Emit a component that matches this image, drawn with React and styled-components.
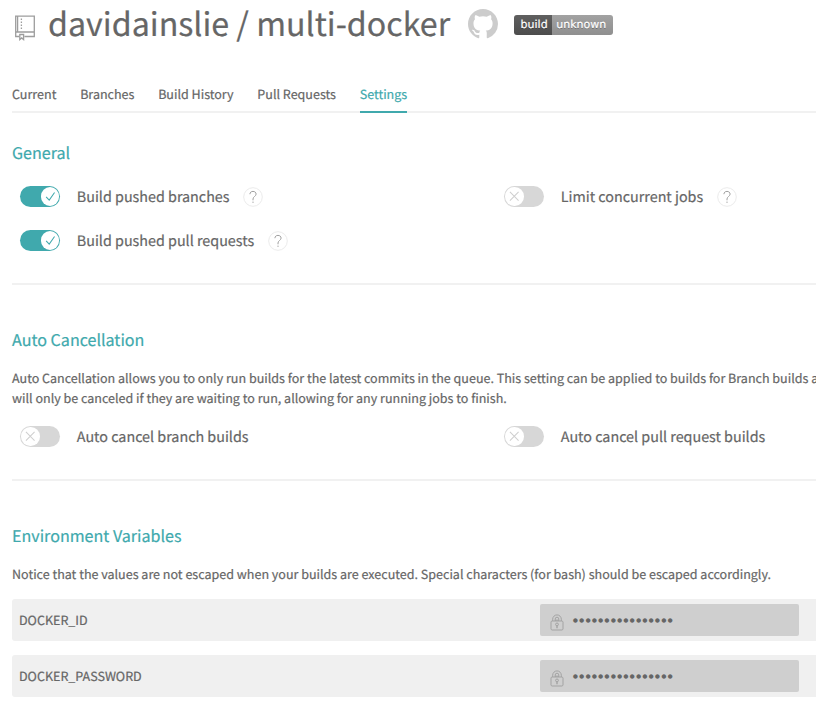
import React from "react";
import styled, { createGlobalStyle } from "styled-components";

const TEAL = "#40a9ad";
const TEXT = "#666";

const GlobalStyle = createGlobalStyle`
  *, *::before, *::after { box-sizing: border-box; }
  body {
    margin: 0;
    background: #fff;
    overflow: hidden;
    color: ${TEXT};
    font-family: "Noto Sans CJK SC", "Noto Sans", sans-serif;
    font-size: 12.54px;
    line-height: 20px;
    text-rendering: geometricPrecision;
    -webkit-font-smoothing: antialiased;
    -webkit-text-stroke: 0.2px;
  }
  h1, h2, p, ul { margin: 0; padding: 0; font-weight: 400; }
`;

const Page = styled.main`
  width: 100%;
  height: 706px;
  padding-left: 12px;
  overflow: hidden;
`;

const Header = styled.header`
  display: flex;
  align-items: flex-start;
  height: 84px;
`;

const RepoIcon = styled.svg`
  display: block;
  width: 22px;
  height: 27px;
  margin: 14px 14px 0 2px;
  fill: none;
  stroke: #9d9d9d;
  stroke-width: 1.3;
`;

const RepoTitle = styled.h1`
  width: 404px;
  margin: 1px 0 0 -2px;
  font-size: 32.2px;
  line-height: 44px;
  white-space: nowrap;
`;

const GithubIcon = styled.svg`
  display: block;
  width: 30px;
  height: 30px;
  margin: 9px 0 0 16px;
  fill: #ccc;
`;

const Badge = styled.div`
  display: flex;
  width: 98.5px;
  height: 20px;
  margin: 15px 0 0 16.4px;
  border-radius: 3px;
  overflow: hidden;
  color: #fff;
  font: 11px/20px "DejaVu Sans", sans-serif;
  text-shadow: 0 1px 0 rgba(1, 1, 1, 0.3);
`;

const BadgePart = styled.span`
  width: ${(p) => p.$width}px;
  padding-left: ${(p) => p.$pad}px;
  background: linear-gradient(rgba(187, 187, 187, 0.1), rgba(0, 0, 0, 0.1)) ${(p) => p.$color};
`;

const Tabs = styled.nav`
  display: flex;
  gap: 23.75px;
  height: 29px;
  border-bottom: 2px solid #f1f1f1;
`;

const Tab = styled.a`
  height: 29px;
  flex-shrink: 0;
  border-bottom: 2px solid ${(p) => (p.$active ? TEAL : "transparent")};
  color: ${(p) => (p.$active ? TEAL : TEXT)};
  line-height: 19px;
  white-space: nowrap;
`;

const Section = styled.section`
  height: ${(p) => p.$height}px;
  padding-top: ${(p) => p.$top}px;
  border-bottom: ${(p) => (p.$last ? 0 : 2)}px solid #f1f1f1;
`;

const SectionTitle = styled.h2`
  color: ${TEAL};
  font-size: 16.08px;
  line-height: 24px;
`;

const Description = styled.p`
  margin-top: 17px;
  white-space: nowrap;
`;

const SettingsGrid = styled.div`
  display: grid;
  grid-template-columns: 484px 1fr;
  row-gap: 23px;
  margin-top: ${(p) => p.$top}px;
  padding-left: 8px;
`;

const Setting = styled.div`
  display: flex;
  align-items: center;
  height: 21px;
  font-size: 14.33px;
  white-space: nowrap;
`;

const Track = styled.span`
  display: flex;
  align-items: center;
  justify-content: ${(p) => (p.$on ? "flex-end" : "flex-start")};
  flex-shrink: 0;
  width: 40px;
  height: 21px;
  margin-right: 16.8px;
  padding: 1px;
  border-radius: 10.5px;
  background: ${(p) => (p.$on ? TEAL : "#d7d7d7")};
`;

const Knob = styled.svg`
  width: 18.5px;
  height: 18.5px;
  border-radius: 50%;
  background: #fff;
  fill: none;
  stroke: ${(p) => (p.$on ? TEAL : "#cfcfcf")};
  stroke-width: 1;
`;

const HelpIcon = styled.svg`
  flex-shrink: 0;
  width: 20px;
  height: 20px;
  margin-left: 13.8px;
  fill: none;
  stroke: #a0a0a0;
  stroke-width: 1;
`;

const VariableRow = styled.div`
  display: flex;
  align-items: center;
  height: 42px;
  margin-top: ${(p) => p.$top}px;
  padding-left: 7px;
  border-radius: 3px 0 0 3px;
  background: #f0f0f0;
`;

const VariableName = styled.span`
  width: 521px;
  padding-bottom: 1px;
`;

const VariableValue = styled.span`
  display: flex;
  align-items: center;
  width: 259px;
  height: 32px;
  padding-left: 10px;
  border-radius: 2px;
  background: #cfcfcf;
`;

const LockIcon = styled.svg`
  width: 14px;
  height: 17px;
  margin: 4px 8px 0 0;
  fill: none;
  stroke: #a3a3a3;
  stroke-width: 1;
`;

const Dots = styled.span`
  padding: 1px 0 0 0.5px;
  font: 16.5px/20px "Liberation Sans", sans-serif;
  letter-spacing: 0.54px;
  -webkit-text-stroke: 0;
`;

function Toggle({ on }) {
  return (
    <Track $on={on} role="switch" aria-checked={!!on}>
      <Knob $on={on} viewBox="0 0 18 18">
        {on ? <path d="M5 9.6 8 12.8 13.2 5.4" /> : <path d="M4.8 4.8l8.4 8.4M13.2 4.8l-8.4 8.4" />}
      </Knob>
    </Track>
  );
}

function Help() {
  return (
    <HelpIcon viewBox="0 0 20 20">
      <circle cx="10" cy="10" r="9.3" stroke="#ebebeb" />
      <path d="M6.9 7.2C7 5.3 8.2 4.4 10 4.4s3.1 1.1 3.1 2.7c0 2.1-3.1 2.6-3.1 4.9v1.3M10 14.6v1.3" />
    </HelpIcon>
  );
}

function SettingItem({ label, on, help }) {
  return (
    <Setting>
      <Toggle on={on} />
      <span>{label}</span>
      {help && <Help />}
    </Setting>
  );
}

function Variable({ name, top }) {
  return (
    <VariableRow $top={top}>
      <VariableName>{name}</VariableName>
      <VariableValue>
        <LockIcon viewBox="0 0 14 17">
          <rect x="1" y="7" width="12" height="9" rx="1.2" />
          <path d="M2.7 7V5.2a4.3 4.3 0 0 1 8.6 0V7M5.2 7V5a1.8 1.8 0 0 1 3.6 0v2M5.2 6.2h3.6" />
          <path d="M7 11.7v2.5" strokeWidth="1.4" />
          <circle cx="7" cy="10.4" r="1.4" />
        </LockIcon>
        <Dots>{"•".repeat(16)}</Dots>
      </VariableValue>
    </VariableRow>
  );
}

const tabs = ["Current", "Branches", "Build History", "Pull Requests", "Settings"];

export default function App() {
  return (
    <Page>
      <GlobalStyle />
      <Header>
        <RepoIcon viewBox="0 0 22 27">
          <path d="M5.2 22.5H1.7V2.2h18.6v20.3H10.4M1.7 18h18.6M3.6 2.2V18" />
          <path d="M7.4 4.5v11" strokeDasharray="1.4 1.6" />
          <path d="M5.8 20.5v5l1.9-1.6 1.9 1.6v-5z" />
        </RepoIcon>
        <RepoTitle>davidainslie / multi-docker</RepoTitle>
        <GithubIcon viewBox="0 0 16 16">
          <path d="M8 0C3.58 0 0 3.58 0 8c0 3.54 2.29 6.53 5.47 7.59.4.07.55-.17.55-.38 0-.19-.01-.82-.01-1.49-2.01.37-2.53-.49-2.69-.94-.09-.23-.48-.94-.82-1.13-.28-.15-.68-.52-.01-.53.63-.01 1.08.58 1.23.82.72 1.21 1.87.87 2.33.66.07-.52.28-.87.51-1.07-1.78-.2-3.64-.89-3.64-3.95 0-.87.31-1.59.82-2.15-.08-.2-.36-1.02.08-2.12 0 0 .67-.21 2.2.82.64-.18 1.32-.27 2-.27.68 0 1.36.09 2 .27 1.53-1.04 2.2-.82 2.2-.82.44 1.1.16 1.92.08 2.12.51.56.82 1.27.82 2.15 0 3.07-1.87 3.75-3.65 3.95.29.25.54.73.54 1.48 0 1.07-.01 1.93-.01 2.2 0 .21.15.46.55.38A8.013 8.013 0 0 0 16 8c0-4.42-3.58-8-8-8z" />
        </GithubIcon>
        <Badge>
          <BadgePart $width={37.3} $pad={6.2} $color="#555">build</BadgePart>
          <BadgePart $width={61.2} $pad={4.6} $color="#9f9f9f">unknown</BadgePart>
        </Badge>
      </Header>
      <Tabs>
        {tabs.map((name) => (
          <Tab key={name} $active={name === "Settings"}>{name}</Tab>
        ))}
      </Tabs>
      <Section $height={172} $top={27}>
        <SectionTitle>General</SectionTitle>
        <SettingsGrid $top={22}>
          <SettingItem label="Build pushed branches" on help />
          <SettingItem label="Limit concurrent jobs" help />
          <SettingItem label="Build pushed pull requests" on help />
        </SettingsGrid>
      </Section>
      <Section $height={196} $top={42}>
        <SectionTitle>Auto Cancellation</SectionTitle>
        <Description>
          Auto Cancellation allows you to only run builds for the latest commits in the queue. This setting can be applied to builds for Branch builds a
          <br />
          will only be canceled if they are waiting to run, allowing for any running jobs to finish.
        </Description>
        <SettingsGrid $top={18}>
          <SettingItem label="Auto cancel branch builds" />
          <SettingItem label="Auto cancel pull request builds" />
        </SettingsGrid>
      </Section>
      <Section $height={225} $top={42} $last>
        <SectionTitle>Environment Variables</SectionTitle>
        <Description>
          Notice that the values are not escaped when your builds are executed. Special characters (for bash) should be escaped accordingly.
        </Description>
        <Variable name="DOCKER_ID" top={15} />
        <Variable name="DOCKER_PASSWORD" top={14} />
      </Section>
    </Page>
  );
}
